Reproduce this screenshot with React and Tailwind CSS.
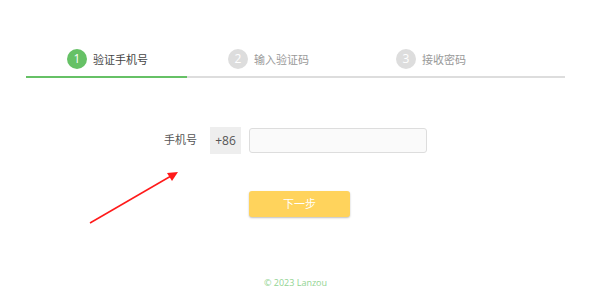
import React from 'react';

const font = { fontFamily: '"Open Sans", "Noto Sans CJK SC", sans-serif' };

const steps = [
  { n: 1, label: '验证手机号', active: true, w: 'w-[161px]' },
  { n: 2, label: '输入验证码', active: false, w: 'w-[168px]' },
  { n: 3, label: '接收密码', active: false, w: 'w-[120px]' },
];

function Step({ n, label, active, w }) {
  return (
    <div className={`flex items-center gap-[6px] ${w}`}>
      <span
        className={`flex h-5 w-5 items-center justify-center rounded-full text-[12px] text-white ${
          active ? 'bg-[#66c166]' : 'bg-[#dddddd]'
        }`}
      >
        {n}
      </span>
      <span className={`text-[11px] leading-none ${active ? 'text-[#444]' : 'text-[#999]'}`}>{label}</span>
    </div>
  );
}

export default function App() {
  return (
    <div className="relative h-[304px] w-[600px] overflow-hidden bg-white" style={font}>
      <div className="ml-[26px] w-[539px] pt-[49px]">
        <div className="flex pl-[41px]">
          {steps.map(s => (
            <Step key={s.n} {...s} />
          ))}
        </div>
        <div className="mt-[7px] flex h-[2px]">
          <div className="w-[161px] bg-[#66c166]" />
          <div className="flex-1 bg-[#dddddd]" />
        </div>

        <div className="mt-[49px] flex items-center">
          <div className="w-[171px] text-right text-[11px] text-[#555]">手机号</div>
          <div className="ml-[13px] flex h-[27px] w-[31px] items-center justify-center bg-[#eeeeee] text-[12px] text-[#555]">
            +86
          </div>
          <input
            className="ml-[8px] h-[25px] w-[178px] rounded-[3px] border border-[#dddddd] bg-[#fafafa] outline-none"
            type="text"
          />
        </div>

        <button className="ml-[223px] mt-[37px] flex h-[26px] w-[101px] items-center justify-center rounded-[3px] bg-[#ffd35c] text-[11px] text-white shadow-[0_1px_2px_rgba(0,0,0,0.25)]">
          下一步
        </button>

        <div className="mt-[60px] text-center text-[9px] leading-[12px] text-[#92d492]">© 2023 Lanzou</div>
      </div>

      <svg className="absolute left-0 top-0" width="600" height="304">
        <line x1="90" y1="223" x2="171" y2="176" stroke="#ff1a1a" strokeWidth="1.5" />
        <polygon points="178,172 167,173 172,181" fill="#ff1a1a" />
      </svg>
    </div>
  );
}
